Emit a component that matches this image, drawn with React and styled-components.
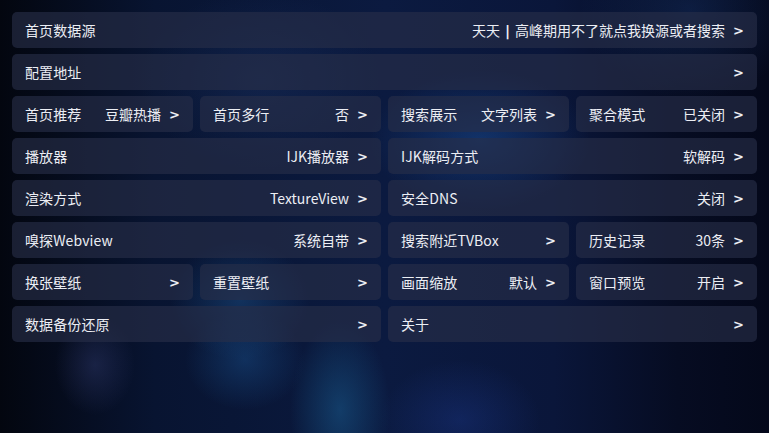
import React from 'react';
import styled, { createGlobalStyle } from 'styled-components';

const GlobalStyle = createGlobalStyle`
  html, body {
    margin: 0;
    padding: 0;
    width: 100%;
    height: 100%;
    overflow: hidden;
  }
  body {
    font-family: "Noto Sans CJK SC", "Noto Sans", "Liberation Sans", sans-serif;
    background-color: #08112a;
  }
`;

const Screen = styled.div`
  width: 769px;
  height: 433px;
  box-sizing: border-box;
  padding: 12px;
  background:
    radial-gradient(ellipse 40px 50px at 95px 365px, rgba(60, 70, 130, 0.35), transparent),
    radial-gradient(ellipse 50px 90px at 340px 410px, rgba(25, 90, 140, 0.55), transparent),
    radial-gradient(ellipse 60px 50px at 245px 360px, rgba(25, 80, 140, 0.45), transparent),
    radial-gradient(ellipse 70px 60px at 240px 300px, rgba(30, 90, 150, 0.4), transparent),
    radial-gradient(ellipse 80px 60px at 460px 420px, rgba(30, 60, 150, 0.35), transparent),
    radial-gradient(ellipse 110px 70px at 480px 140px, rgba(30, 90, 170, 0.4), transparent),
    radial-gradient(ellipse 110px 90px at 690px 10px, rgba(30, 70, 140, 0.3), transparent),
    radial-gradient(ellipse 120px 90px at 260px 80px, rgba(40, 70, 130, 0.25), transparent),
    linear-gradient(90deg, #03060f 0%, #081431 20%, #0b1a40 50%, #0a163a 72%, #060c22 88%, #04081a 100%);
`;

const Grid = styled.div`
  display: grid;
  grid-template-columns: repeat(4, 181px);
  grid-auto-rows: 36px;
  column-gap: 7px;
  row-gap: 6px;
`;

const Cell = styled.div`
  grid-column: span ${(props) => props.span || 1};
  display: flex;
  align-items: center;
  justify-content: space-between;
  padding: 0 13px;
  border-radius: 5px;
  background: rgba(40, 46, 72, 0.62);
  color: #eceef4;
  font-size: 14px;
  line-height: 1;
  white-space: nowrap;
`;

const Label = styled.span`
  letter-spacing: 0.1px;
`;

const Value = styled.span`
  display: flex;
  align-items: center;
  gap: 8px;
`;

const Divider = styled.span`
  font-family: "DejaVu Sans", sans-serif;
  font-weight: bold;
  margin: 0 5px;
`;

const Arrow = styled.span`
  font-family: "DejaVu Sans", sans-serif;
  font-size: 13px;
  font-weight: bold;
`;

const items = [
  { label: '首页数据源', value: ['天天', '高峰期用不了就点我换源或者搜索'], span: 4 },
  { label: '配置地址', value: '', span: 4 },
  { label: '首页推荐', value: '豆瓣热播' },
  { label: '首页多行', value: '否' },
  { label: '搜索展示', value: '文字列表' },
  { label: '聚合模式', value: '已关闭' },
  { label: '播放器', value: 'IJK播放器', span: 2 },
  { label: 'IJK解码方式', value: '软解码', span: 2 },
  { label: '渲染方式', value: 'TextureView', span: 2 },
  { label: '安全DNS', value: '关闭', span: 2 },
  { label: '嗅探Webview', value: '系统自带', span: 2 },
  { label: '搜索附近TVBox', value: '' },
  { label: '历史记录', value: '30条' },
  { label: '换张壁纸', value: '' },
  { label: '重置壁纸', value: '' },
  { label: '画面缩放', value: '默认' },
  { label: '窗口预览', value: '开启' },
  { label: '数据备份还原', value: '', span: 2 },
  { label: '关于', value: '', span: 2 },
];

export default function App() {
  return (
    <>
      <GlobalStyle />
      <Screen>
        <Grid>
          {items.map((item) => (
            <Cell key={item.label} span={item.span}>
              <Label>{item.label}</Label>
              <Value>
                {Array.isArray(item.value) ? (
                  <span>
                    {item.value[0]}
                    <Divider>|</Divider>
                    {item.value[1]}
                  </span>
                ) : (
                  item.value && <span>{item.value}</span>
                )}
                <Arrow>&gt;</Arrow>
              </Value>
            </Cell>
          ))}
        </Grid>
      </Screen>
    </>
  );
}
